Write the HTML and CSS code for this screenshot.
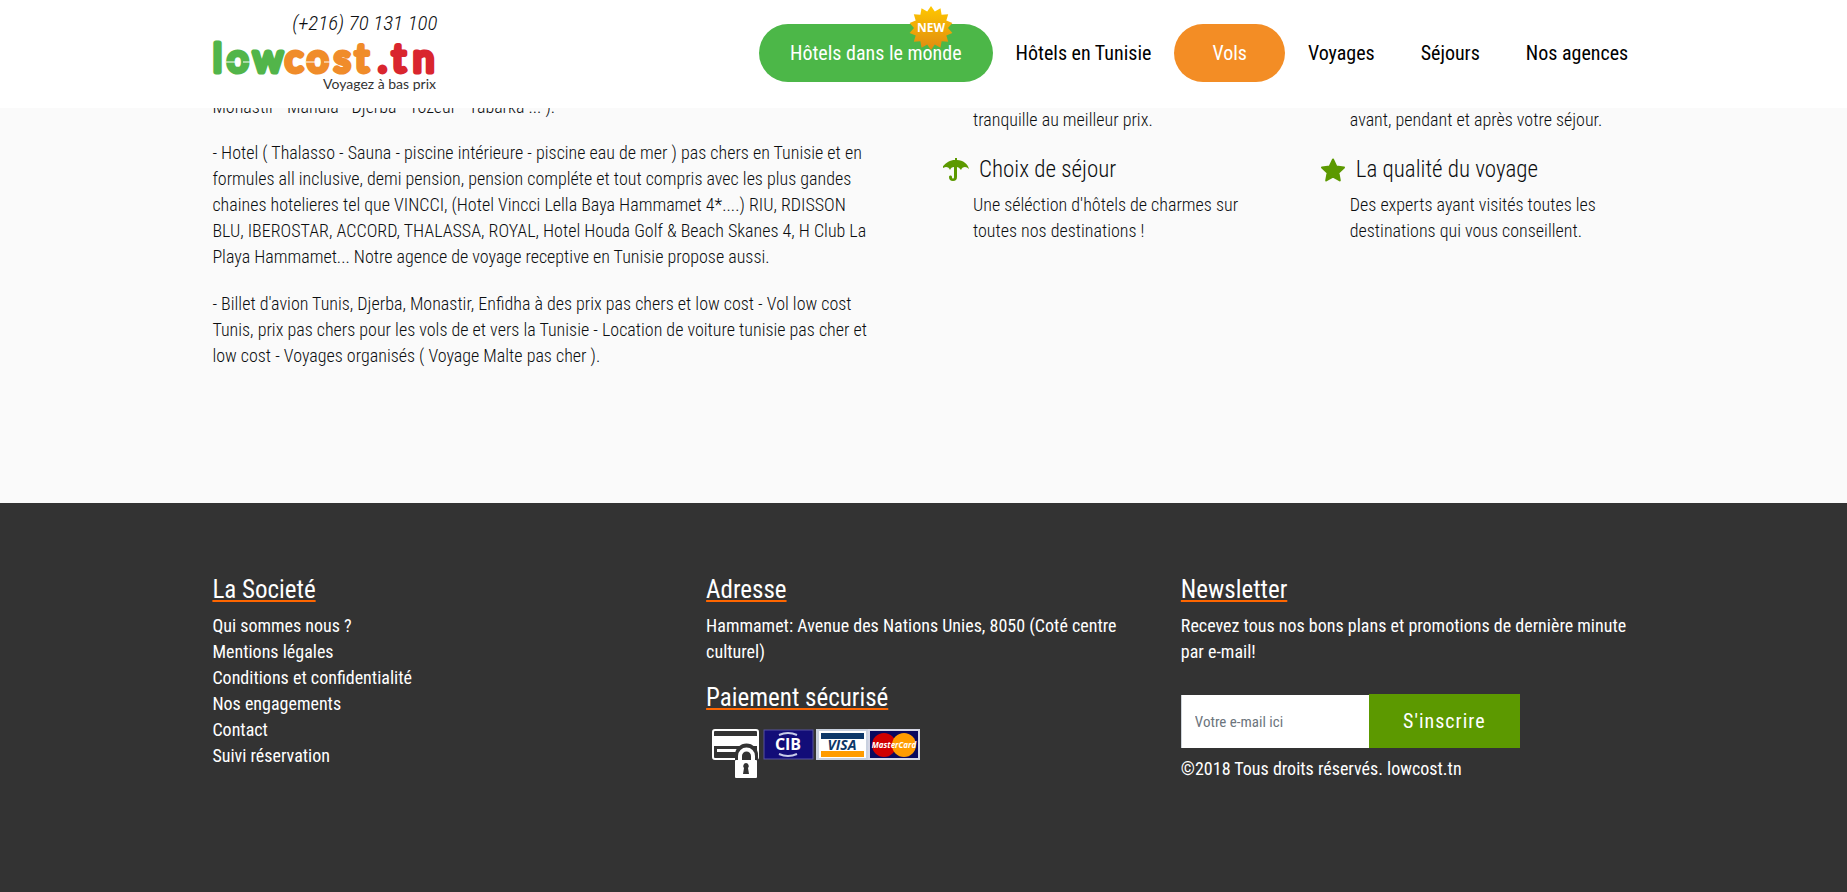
FILE: index.html
```html
<!DOCTYPE html>
<html lang="fr">
<head>
<meta charset="utf-8">
<meta name="viewport" content="width=device-width, initial-scale=1">
<title>lowcost.tn - Voyagez à bas prix</title>
<link rel="stylesheet" href="styles.css">
</head>
<body>
<header class="site-header">
  <div class="brand">
    <a class="phone" href="#">(+216) 70 131 100</a>
    <a class="logo" href="#" aria-label="lowcost.tn">
      <svg width="225" height="60" viewBox="0 0 225 60">
        <g class="wordmark">
          <text class="low" y="36" x="1 15 41">low</text>
          <text class="cost" y="36" x="73 95 122 143">cost</text>
          <text class="tn" y="36" x="166 180 201">.tn</text>
        </g>
        <path class="cut" d="M14 26h9M31 26h9M94 26h9M112 26h9"/>
        <text class="tagline" x="224" y="53" text-anchor="end">Voyagez à bas prix</text>
      </svg>
    </a>
  </div>
  <nav class="menu">
    <a class="pill world" href="#">Hôtels dans le monde
      <svg class="new-badge" width="44" height="44" viewBox="0 0 44 44">
        <defs><linearGradient id="gold" x1="0" y1="0" x2="0" y2="1"><stop offset="0" stop-color="#ffc800"/><stop offset="1" stop-color="#e08a10"/></linearGradient></defs>
        <path fill="url(#gold)" d="M22 0L25.800 5.400 31.500 2.200 32.600 8.700 39.200 8.300 37.300 14.600 43.400 17.100 39 22 43.400 26.900 37.300 29.400 39.200 35.700 32.600 35.300 31.500 41.800 25.800 38.600 22 44 18.200 38.600 12.500 41.800 11.400 35.300 4.800 35.700 6.700 29.400 .6 26.900 5 22 .6 17.100 6.700 14.600 4.800 8.300 11.400 8.700 12.500 2.200 18.200 5.400z"/>
        <text x="22" y="26" text-anchor="middle">NEW</text>
      </svg>
    </a>
    <a class="item" href="#">Hôtels en Tunisie</a>
    <a class="pill flights" href="#">Vols</a>
    <a class="item" href="#">Voyages</a>
    <a class="item" href="#">Séjours</a>
    <a class="item" href="#">Nos agences</a>
  </nav>
</header>

<main class="content">
  <div class="about">
    <p>Monastir - Mahdia - Djerba - Tozeur - Tabarka ... ).</p>
    <p>- Hotel ( Thalasso - Sauna - piscine intérieure - piscine eau de mer ) pas chers en Tunisie et en<br>formules all inclusive, demi pension, pension compléte et tout compris avec les plus gandes<br>chaines hotelieres tel que VINCCI, (Hotel Vincci Lella Baya Hammamet 4*....) RIU, RDISSON<br>BLU, IBEROSTAR, ACCORD, THALASSA, ROYAL, Hotel Houda Golf &amp; Beach Skanes 4, H Club La<br>Playa Hammamet... Notre agence de voyage receptive en Tunisie propose aussi.</p>
    <p>- Billet d'avion Tunis, Djerba, Monastir, Enfidha à des prix pas chers et low cost - Vol low cost<br>Tunis, prix pas chers pour les vols de et vers la Tunisie - Location de voiture tunisie pas cher et<br>low cost - Voyages organisés ( Voyage Malte pas cher ).</p>
  </div>
  <div class="feature">
    <p>tranquille au meilleur prix.</p>
    <h3><svg width="26" height="24" viewBox="0 0 26 24"><path fill="#5c9900" d="M12 0h2v2c6 0 11 4 12 9q-2-2-4-2-3 0-4 3-2-3-4-3v10a4 4 0 0 1-8 0c0-2 3-2 3 0 0 2 2 2 2 0V9q-3 0-4 3-1-3-4-3-1 0-5 2C1 6 6 2 12 2z"/></svg>Choix de séjour</h3>
    <p>Une séléction d'hôtels de charmes sur<br>toutes nos destinations !</p>
  </div>
  <div class="feature">
    <p>avant, pendant et après votre séjour.</p>
    <h3><svg width="26" height="24" viewBox="0 0 26 24"><path fill="#5c9900" stroke="#5c9900" stroke-width="2" stroke-linejoin="round" d="M13 1.500l3.300 7 7.700 1-5.600 5.300 1.400 7.600-6.800-3.700-6.800 3.700 1.400-7.600L2 9.500l7.700-1z"/></svg>La qualité du voyage</h3>
    <p>Des experts ayant visités toutes les<br>destinations qui vous conseillent.</p>
  </div>
</main>

<footer class="site-footer">
  <section>
    <h2>La Societé</h2>
    <ul>
      <li><a href="#">Qui sommes nous ?</a></li>
      <li><a href="#">Mentions légales</a></li>
      <li><a href="#">Conditions et confidentialité</a></li>
      <li><a href="#">Nos engagements</a></li>
      <li><a href="#">Contact</a></li>
      <li><a href="#">Suivi réservation</a></li>
    </ul>
  </section>
  <section>
    <h2>Adresse</h2>
    <p>Hammamet: Avenue des Nations Unies, 8050 (Coté centre<br>culturel)</p>
    <h2>Paiement sécurisé</h2>
    <svg class="cards" width="216" height="54" viewBox="0 0 216 54">
      <rect x="7" y="5" width="45" height="29" rx="2" fill="none" stroke="#fff" stroke-width="2"/>
      <path fill="#fff" d="M7 11h45v10H7zM11 24h24v3H11z"/>
      <path fill="#333" d="M29 36v-6a11 11 0 0 1 23 0v6z"/>
      <path fill="none" stroke="#fff" stroke-width="4" d="M34 36v-5a6 6 0 0 1 13 0v5"/>
      <rect x="29" y="35" width="22" height="18" rx="1" fill="#fff"/>
      <path fill="#333" d="M40 38a3 3 0 0 1 2 5l1 6h-6l1-6a3 3 0 0 1 2-5z"/>
      <rect x="58" y="5" width="49" height="29" fill="#120d78" stroke="#5653a0"/>
      <path fill="none" stroke="#c8cce8" stroke-width="2" d="M73 10q9-4 18 0M73 29q9 4 18 0"/>
      <text class="cib" x="82" y="25" text-anchor="middle">CIB</text>
      <rect x="110" y="4" width="53" height="31" fill="#c9d1df"/>
      <rect x="113" y="6" width="47" height="27" fill="#fff"/>
      <path fill="#0d3768" d="M115 8h43v6h-43z"/><path fill="#ff9c00" d="M115 26h43v6h-43z"/>
      <text class="visa" x="136" y="25" text-anchor="middle">VISA</text>
      <rect x="163" y="5" width="50" height="29" fill="#09095e" stroke="#d5d7e5" stroke-width="2"/>
      <circle cx="178" cy="20" r="12" fill="#d00000"/><circle cx="198" cy="20" r="12" fill="#ff9c00"/>
      <text class="master" x="188" y="23" text-anchor="middle">MasterCard</text>
    </svg>
  </section>
  <section>
    <h2>Newsletter</h2>
    <p>Recevez tous nos bons plans et promotions de dernière minute<br>par e-mail!</p>
    <form class="subscribe">
      <input type="email" aria-label="Votre e-mail" placeholder="Votre e-mail ici">
      <button type="button">S'inscrire</button>
    </form>
    <p>©2018 Tous droits réservés. lowcost.tn</p>
  </section>
</footer>
</body>
</html>
```
FILE: styles.css
```css
* { box-sizing: border-box; }
body {
  margin: 0;
  min-height: 100vh;
  display: flex;
  flex-direction: column;
  font-family: "Roboto Condensed", Roboto, "Liberation Sans", sans-serif;
  font-size: 18px;
  line-height: 26px;
  color: #0c0e10;
  background: #fafafa;
}
a { color: inherit; text-decoration: none; }
h2, h3, p, ul { margin: 0; padding: 0; font-weight: inherit; }
ul { list-style: none; }

.site-header {
  position: fixed;
  inset: 0 0 auto;
  z-index: 1;
  height: 108px;
  padding: 0 10.6% 0 11.5%;
  display: flex;
  justify-content: space-between;
  background: #fff;
}
.brand { display: flex; flex-direction: column; align-items: flex-end; padding-top: 10px; }
.phone { font-size: 21px; font-style: italic; font-weight: 300; }
.logo svg { display: block; overflow: visible; }
.wordmark text { font: 400 38px Lato, sans-serif; stroke-width: 5; stroke-linejoin: round; }
.low { fill: #52b54a; stroke: #52b54a; }
.cost { fill: #f08c2a; stroke: #f08c2a; }
.tn { fill: #d9262e; stroke: #d9262e; }
.cut { stroke: #fff; stroke-width: 1; }
.tagline { font: 400 14px Lato, sans-serif; fill: #333; }

.menu { display: flex; align-items: center; height: 106px; font-size: 20px; color: #000; white-space: nowrap; }
.item { padding: 0 23px; }
.pill { position: relative; padding: 16px 31px; border-radius: 29px; color: #fff; }
.world { isolation: isolate; background: #4cb748; }
.flights { background: #f38d25; padding: 16px 38px; }
.new-badge { position: absolute; z-index: -1; top: -18px; right: 40px; }
.new-badge text { font: 700 12px "Open Sans", sans-serif; fill: #fff; }

.content {
  display: grid;
  grid-template-columns: 731fr 377fr 315fr;
  padding: 94px 11.5% 134px;
  font-weight: 300;
}
.about { display: flex; flex-direction: column; gap: 20px; white-space: nowrap; }
.about p:last-child { padding-top: 1px; }
.feature { padding-top: 13px; white-space: nowrap; }
.feature p { padding-left: 30px; }
.feature h3 { display: flex; align-items: center; gap: 10px; font-size: 23px; line-height: 30px; margin: 22px 0 7px; }

.site-footer {
  flex: 1;
  display: grid;
  grid-template-columns: 494fr 475fr 454fr;
  padding: 72px 11.5%;
  color: #fff;
  background: #333;
}
.site-footer h2 {
  font-size: 25px;
  line-height: 30px;
  margin-bottom: 8px;
  text-decoration: underline #ff6600 2px;
  text-underline-offset: 2px;
  text-decoration-skip-ink: none;
}
.site-footer p { white-space: nowrap; }
.site-footer p + h2 { margin-top: 18px; }
.cards { display: block; margin-top: 12px; }
.cib { font: 700 16px "Open Sans", sans-serif; fill: #fff; }
.visa { font: italic 700 14px "Open Sans", sans-serif; fill: #0d3768; }
.master { font: italic 700 8px "Open Sans", sans-serif; fill: #fff; }

.subscribe { display: flex; align-items: flex-end; margin: 29px 0 8px; }
.subscribe input {
  width: 188px;
  height: 53px;
  padding: 0 13px;
  border: 1px solid #ced4da;
  border-width: 0 0 0 1px;
  border-radius: 0;
  font: 15px "Roboto Condensed", Roboto, sans-serif;
  background: #fff;
}
.subscribe input::placeholder { color: #6c757d; }
.subscribe button {
  width: 151px;
  height: 54px;
  border: 0;
  font: 20px "Roboto Condensed", Roboto, sans-serif;
  letter-spacing: 1px;
  color: #fff;
  background: #5c9900;
}
```
